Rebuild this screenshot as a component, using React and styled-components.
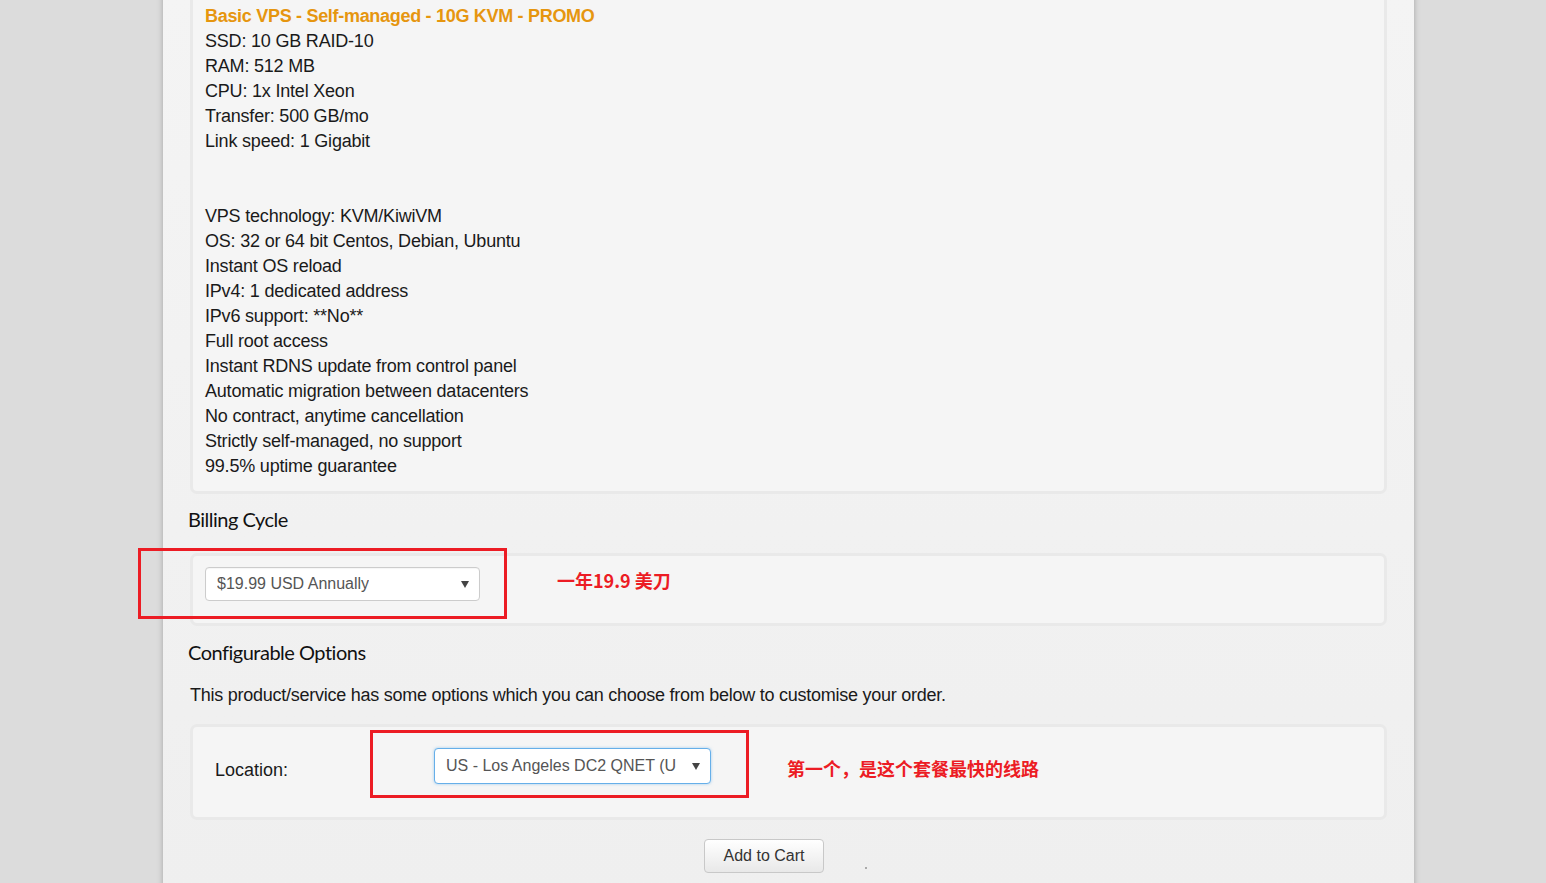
import React from 'react';
import styled, { createGlobalStyle } from 'styled-components';

const GlobalStyle = createGlobalStyle`
  html, body {
    margin: 0;
    padding: 0;
    background: #dcdcdc;
    overflow: hidden;
  }
  body {
    font-family: "Liberation Sans", Arial, sans-serif;
    color: #1a1a1a;
  }
`;

const Page = styled.div`
  height: 883px;
  overflow: hidden;
`;

const Container = styled.div`
  width: 1251px;
  margin-left: 163px;
  margin-top: -9px;
  min-height: 900px;
  padding: 0 27px;
  box-sizing: border-box;
  background: linear-gradient(#f4f4f4, #efefef);
  box-shadow: 0 0 6px rgba(0, 0, 0, 0.25);
`;

const Well = styled.div`
  position: relative;
  box-sizing: border-box;
  background: #f5f5f5;
  border: 3px solid #e9e9e9;
  border-radius: 7px;
  padding: ${p => p.$pad || '10px 12px'};
`;

const Specs = styled.div`
  font-size: 18px;
  line-height: 25px;
  letter-spacing: -0.2px;
`;

const PlanName = styled.div`
  color: #e6960f;
  font-weight: bold;
  letter-spacing: -0.3px;
`;

const Heading = styled.h3`
  margin: ${p => p.$margin || '11px 0 20px -2px'};
  font-family: Lato, "Open Sans", sans-serif;
  font-weight: 400;
  font-size: 20px;
  line-height: 28px;
  color: #111;
  letter-spacing: -0.5px;
`;

const Intro = styled.p`
  margin: 17px 0 16px;
  font-size: 18px;
  line-height: 25px;
  letter-spacing: -0.25px;
`;

const Select = styled.div`
  position: relative;
  box-sizing: border-box;
  width: ${p => p.$width}px;
  height: ${p => p.$height}px;
  background: #fff;
  border: 1px solid ${p => (p.$focus ? '#66afe9' : '#cccccc')};
  border-radius: 4px;
  box-shadow: ${p =>
    p.$focus ? '0 0 3px rgba(102, 175, 233, 0.6)' : 'inset 0 1px 1px rgba(0,0,0,0.04)'};
  display: flex;
  align-items: center;
  padding: 0 28px 0 11px;
  font-size: 16px;
  color: #555;
  &::after {
    content: '';
    position: absolute;
    right: 10px;
    top: 50%;
    margin-top: -3px;
    border-left: 4px solid transparent;
    border-right: 4px solid transparent;
    border-top: 7px solid #444;
  }
`;

const SelectText = styled.span`
  display: block;
  overflow: hidden;
  white-space: nowrap;
`;

const BillingRow = styled.div`
  margin-bottom: 11px;
`;

const OptionRow = styled.div`
  display: grid;
  grid-template-columns: 241px 277px;
  align-items: center;
`;

const Label = styled.div`
  padding-left: 22px;
  padding-top: 8px;
  font-size: 18px;
  color: #1a1a1a;
`;

const RedBox = styled.div`
  position: absolute;
  left: ${p => p.$left}px;
  top: ${p => p.$top}px;
  width: ${p => p.$w}px;
  height: ${p => p.$h}px;
  box-sizing: border-box;
  border: 3px solid #ec1c24;
  pointer-events: none;
`;

const Note = styled.div`
  position: absolute;
  left: ${p => p.$left}px;
  top: ${p => p.$top}px;
  font-family: "Noto Sans CJK SC", "Noto Sans", sans-serif;
  font-weight: bold;
  font-size: 18px;
  line-height: 24px;
  color: #ec1c24;
  white-space: nowrap;
`;

const Actions = styled.div`
  display: flex;
  justify-content: center;
  align-items: center;
  margin-top: 19px;
  padding-right: 6px;
`;

const CartButton = styled.button`
  width: 120px;
  height: 34px;
  border: 1px solid #c8c8c8;
  border-radius: 4px;
  background: linear-gradient(#ffffff, #e8e8e8);
  font-family: "Liberation Sans", Arial, sans-serif;
  font-size: 16px;
  color: #333;
  cursor: pointer;
`;

const Dot = styled.span`
  width: 2px;
  height: 2px;
  background: #aaa;
  margin: 24px 0 0 41px;
  align-self: center;
`;

const specs = [
  'SSD: 10 GB RAID-10',
  'RAM: 512 MB',
  'CPU: 1x Intel Xeon',
  'Transfer: 500 GB/mo',
  'Link speed: 1 Gigabit',
  '',
  '',
  'VPS technology: KVM/KiwiVM',
  'OS: 32 or 64 bit Centos, Debian, Ubuntu',
  'Instant OS reload',
  'IPv4: 1 dedicated address',
  'IPv6 support: **No**',
  'Full root access',
  'Instant RDNS update from control panel',
  'Automatic migration between datacenters',
  'No contract, anytime cancellation',
  'Strictly self-managed, no support',
  '99.5% uptime guarantee',
];

export default function App() {
  return (
    <Page>
      <GlobalStyle />
      <Container>
        <Well $pad="10px 12px 12px">
          <Specs>
            <PlanName>Basic VPS - Self-managed - 10G KVM - PROMO</PlanName>
            {specs.map((s, i) => (
              <div key={i}>{s || '\u00a0'}</div>
            ))}
          </Specs>
        </Well>

        <Heading>Billing Cycle</Heading>
        <Well $pad="11px 12px 11px">
          <BillingRow>
            <Select $width={275} $height={34}>
              <SelectText>$19.99 USD Annually</SelectText>
            </Select>
          </BillingRow>
          <RedBox $left={-55} $top={-8} $w={369} $h={71} />
          <Note $left={364} $top={12}>一年19.9 美刀</Note>
        </Well>

        <Heading $margin="12px 0 0 -2px">Configurable Options</Heading>
        <Intro>This product/service has some options which you can choose from below to customise your order.</Intro>
        <Well $pad="21px 12px 33px 0">
          <OptionRow>
            <Label>Location:</Label>
            <Select $width={277} $height={36} $focus>
              <SelectText>US - Los Angeles DC2 QNET (U</SelectText>
            </Select>
          </OptionRow>
          <RedBox $left={177} $top={3} $w={379} $h={68} />
          <Note $left={594} $top={29}>第一个，是这个套餐最快的线路</Note>
        </Well>

        <Actions>
          <CartButton>Add to Cart</CartButton>
          <Dot />
        </Actions>
      </Container>
    </Page>
  );
}
